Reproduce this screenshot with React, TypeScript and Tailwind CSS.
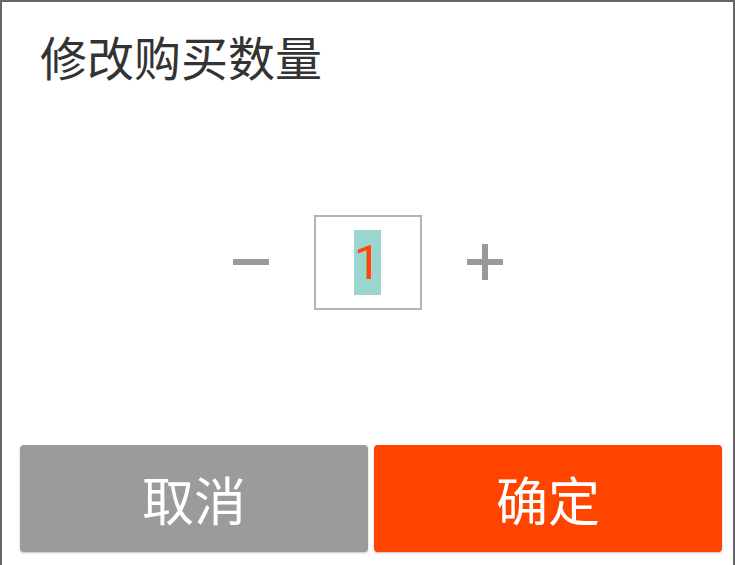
export default function App() {
  return (
    <div className="flex h-[565px] w-[735px] flex-col border-x-2 border-t-2 border-[#666666] bg-white font-['Noto_Sans_CJK_SC',sans-serif]">
      <h1 className="pl-[38px] pt-[26px] text-[47px] leading-[56px] text-[#333333]">修改购买数量</h1>

      {/* stepper */}
      <div className="flex flex-1 items-center justify-center gap-[45px] pb-[5px]">
        <button className="flex h-[36px] w-[36px] items-center justify-center">
          <span className="block h-[6px] w-[36px] bg-[#999999]" />
        </button>
        <div className="flex h-[95px] w-[108px] items-center justify-center border-2 border-[#b4b4b4]">
          <span className="inline-block h-[65px] w-[27px] bg-[#9bd5cf] text-center font-['Roboto',sans-serif] text-[48px] leading-[65px] text-[#ff4500]">
            1
          </span>
        </div>
        <button className="relative flex h-[36px] w-[36px] items-center justify-center">
          <span className="absolute h-[6px] w-[36px] bg-[#999999]" />
          <span className="absolute h-[36px] w-[6px] bg-[#999999]" />
        </button>
      </div>

      <div className="flex gap-[6px] pb-[13px] pl-[18px] pr-[11px]">
        <button className="h-[107px] flex-1 rounded-[4px] bg-[#9b9b9b] text-[52px] text-white shadow-[0_1px_2px_rgba(0,0,0,0.25)]">
          取消
        </button>
        <button className="h-[107px] flex-1 rounded-[4px] bg-[#ff4400] text-[52px] text-white shadow-[0_1px_2px_rgba(0,0,0,0.25)]">
          确定
        </button>
      </div>
    </div>
  )
}
